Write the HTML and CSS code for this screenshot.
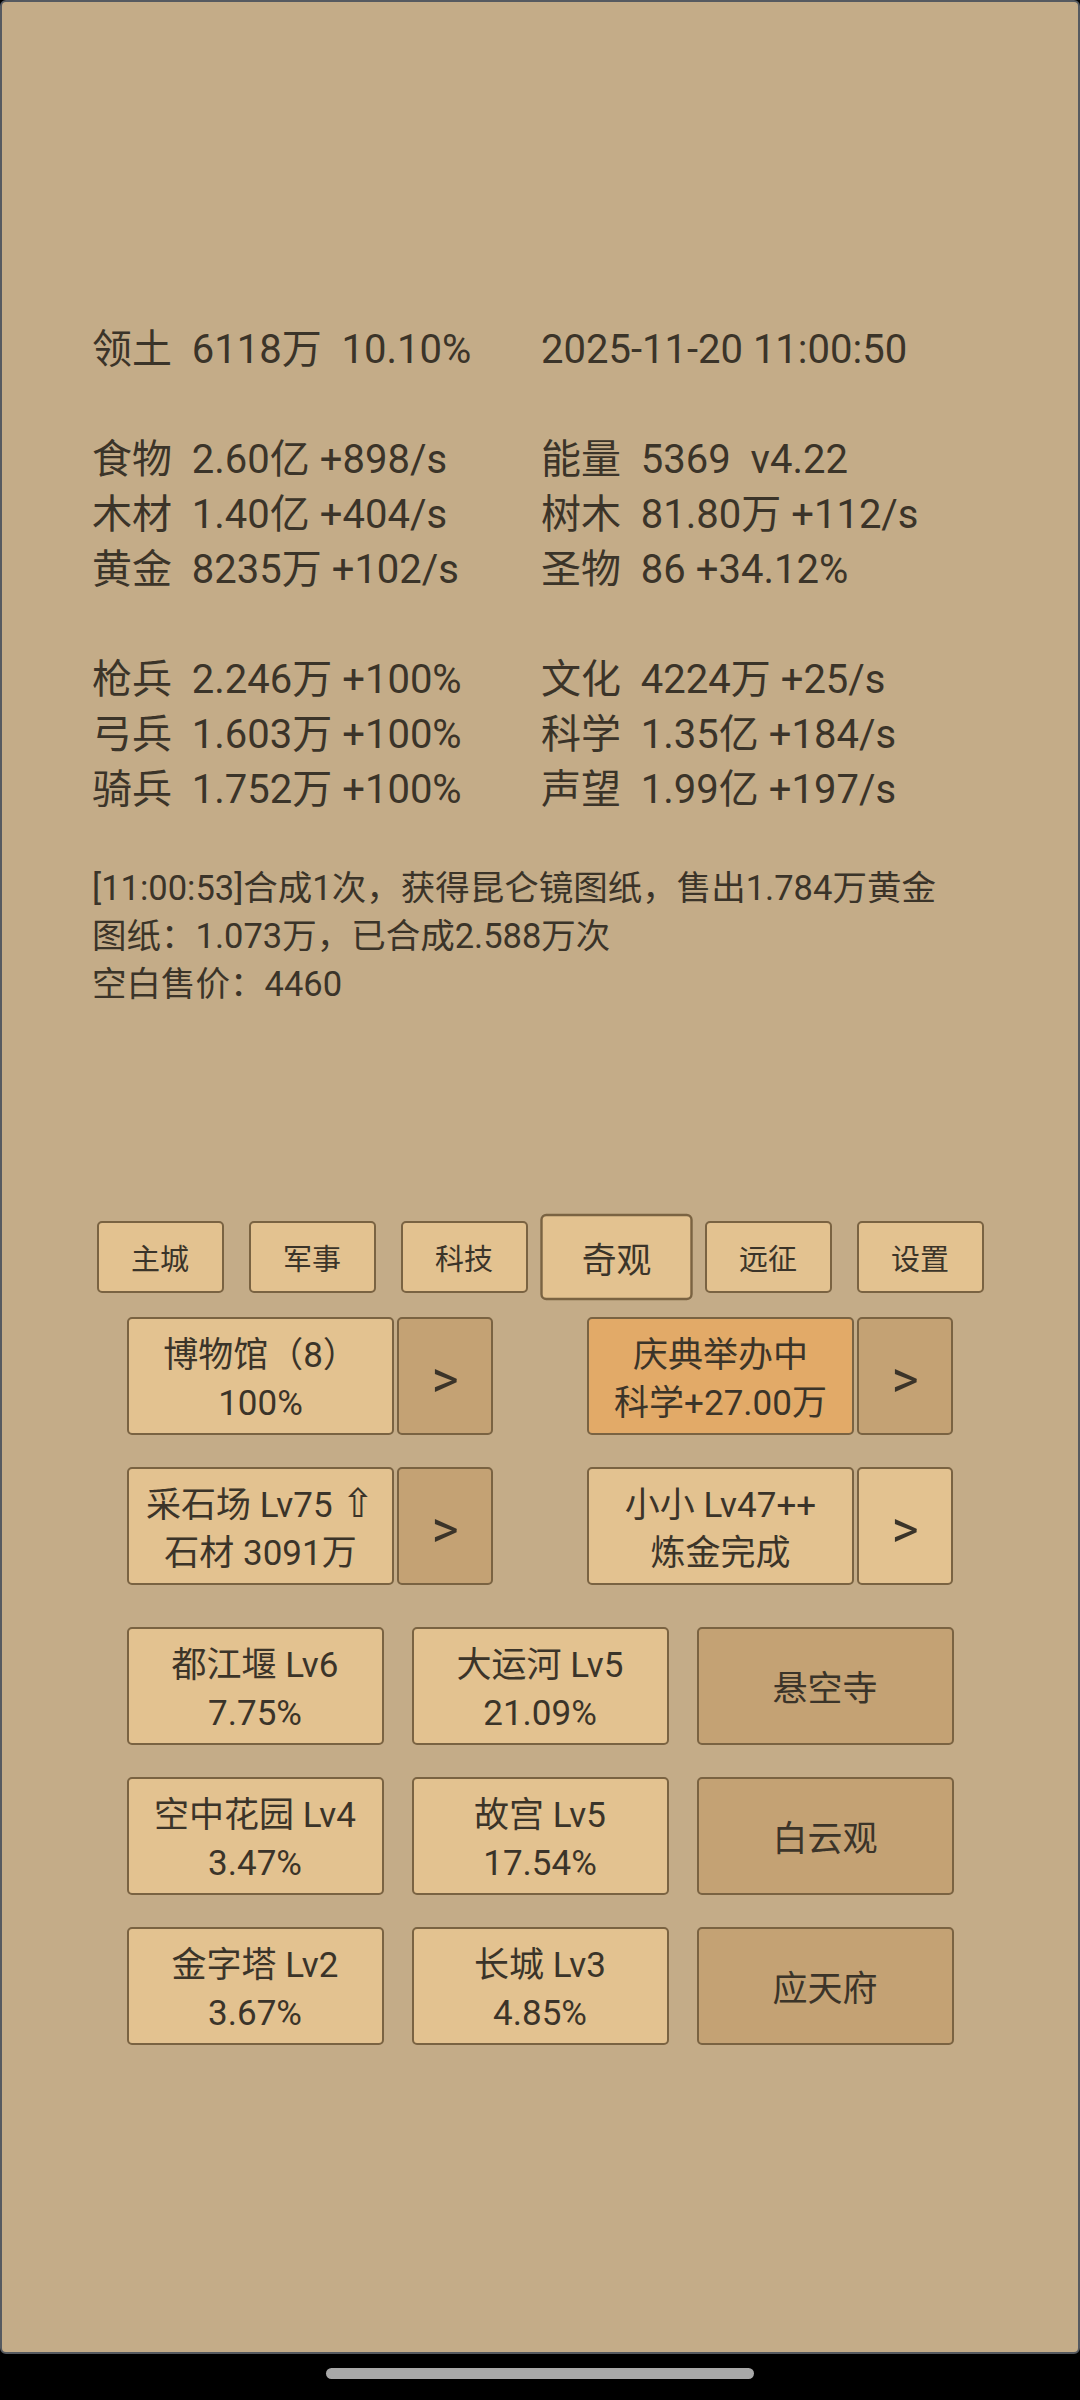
FILE: index.html
```html
<!DOCTYPE html>
<html lang="zh-CN">
<head>
    <meta charset="UTF-8">
    <meta name="viewport" content="width=device-width, initial-scale=1.0">
    <title>奇观</title>
    <link rel="stylesheet" href="styles.css">
</head>
<body>
    <div class="screen">
        <div class="stats">
            <div>领土  6118万  10.10%</div>
            <div>2025-11-20 11:00:50</div>
            <div class="blank"></div>
            <div>食物  2.60亿 +898/s</div>
            <div>能量  5369  v4.22</div>
            <div>木材  1.40亿 +404/s</div>
            <div>树木  81.80万 +112/s</div>
            <div>黄金  8235万 +102/s</div>
            <div>圣物  86 +34.12%</div>
            <div class="blank"></div>
            <div>枪兵  2.246万 +100%</div>
            <div>文化  4224万 +25/s</div>
            <div>弓兵  1.603万 +100%</div>
            <div>科学  1.35亿 +184/s</div>
            <div>骑兵  1.752万 +100%</div>
            <div>声望  1.99亿 +197/s</div>
        </div>

        <div class="log">
            <div>[11:00:53]合成1次，获得昆仑镜图纸，售出1.784万黄金</div>
            <div>图纸：1.073万，已合成2.588万次</div>
            <div>空白售价：4460</div>
        </div>

        <div class="tabs">
            <div class="tab">主城</div>
            <div class="tab">军事</div>
            <div class="tab">科技</div>
            <div class="tab active">奇观</div>
            <div class="tab">远征</div>
            <div class="tab">设置</div>
        </div>

        <div class="pairs">
            <div class="pair-row">
                <div class="group">
                    <div class="btn main"><span>博物馆（8）</span><span>100%</span></div>
                    <div class="btn arrow dark">&gt;</div>
                </div>
                <div class="group">
                    <div class="btn main hot"><span>庆典举办中</span><span>科学+27.00万</span></div>
                    <div class="btn arrow dark">&gt;</div>
                </div>
            </div>
            <div class="pair-row">
                <div class="group">
                    <div class="btn main"><span>采石场 Lv75 <span class="up">⇧</span></span><span>石材 3091万</span></div>
                    <div class="btn arrow dark">&gt;</div>
                </div>
                <div class="group">
                    <div class="btn main"><span>小小 Lv47++</span><span>炼金完成</span></div>
                    <div class="btn arrow">&gt;</div>
                </div>
            </div>
        </div>

        <div class="wonders">
            <div class="btn"><span>都江堰 Lv6</span><span>7.75%</span></div>
            <div class="btn"><span>大运河 Lv5</span><span>21.09%</span></div>
            <div class="btn dark"><span>悬空寺</span></div>
            <div class="btn"><span>空中花园 Lv4</span><span>3.47%</span></div>
            <div class="btn"><span>故宫 Lv5</span><span>17.54%</span></div>
            <div class="btn dark"><span>白云观</span></div>
            <div class="btn"><span>金字塔 Lv2</span><span>3.67%</span></div>
            <div class="btn"><span>长城 Lv3</span><span>4.85%</span></div>
            <div class="btn dark"><span>应天府</span></div>
        </div>
    </div>

    <div class="navbar">
        <div class="pill"></div>
    </div>
</body>
</html>
```

FILE: styles.css
```css
body {
    margin: 0;
    background: #000;
    font-family: Roboto, "Noto Sans CJK SC", sans-serif;
    color: #3b3429;
}
.screen {
    height: 2354px;
    box-sizing: border-box;
    border: 2px solid #565a60;
    border-radius: 6px;
    background: #c4ac88;
    padding-top: 320px;
    overflow: hidden;
}
.stats {
    margin-left: 90px;
    display: grid;
    grid-template-columns: 449px auto;
    grid-auto-rows: 55px;
    font-size: 40px;
    line-height: 55px;
    white-space: pre;
}
.stats .blank {
    grid-column: 1 / -1;
}
.log {
    margin: 47px 0 0 90px;
    font-size: 34.5px;
    line-height: 48px;
}
.log div {
    height: 48px;
    white-space: nowrap;
}
.tabs {
    display: flex;
    justify-content: center;
    align-items: center;
    height: 87px;
    margin-top: 205px;
}
.tab {
    width: 127px;
    height: 72px;
    margin: 0 12.5px;
    box-sizing: border-box;
    background: #e3c290;
    border: 2px solid #7a6342;
    border-radius: 5px;
    font-size: 29px;
    display: flex;
    align-items: center;
    justify-content: center;
}
.tab.active {
    transform: scale(1.2);
}
.pairs {
    margin-top: 17px;
    display: flex;
    flex-direction: column;
    gap: 32px;
}
.pair-row {
    display: flex;
    justify-content: center;
    gap: 94px;
    height: 118px;
}
.group {
    display: flex;
    gap: 3px;
}
.btn {
    box-sizing: border-box;
    padding-top: 8px;
    border: 2px solid #7a6342;
    border-radius: 5px;
    background: #e3c290;
    display: flex;
    flex-direction: column;
    justify-content: center;
    align-items: center;
    font-size: 35px;
    line-height: 48px;
    white-space: nowrap;
}
.btn > span {
    height: 48px;
}
.main {
    width: 267px;
}
.arrow {
    width: 96px;
    font-size: 52px;
}
.hot {
    background: #e2aa68;
}
.dark {
    background: #c4a274;
}
.up {
    font-family: "DejaVu Sans", sans-serif;
    font-size: 40px;
    line-height: 40px;
}
.wonders {
    margin-top: 42px;
    display: grid;
    grid-template-columns: repeat(3, 257px);
    grid-auto-rows: 118px;
    gap: 32px 28px;
    justify-content: center;
}
.navbar {
    height: 46px;
    display: flex;
    justify-content: center;
}
.pill {
    width: 428px;
    height: 11px;
    margin-top: 14px;
    border-radius: 6px;
    background: #a8a8a8;
}
```
